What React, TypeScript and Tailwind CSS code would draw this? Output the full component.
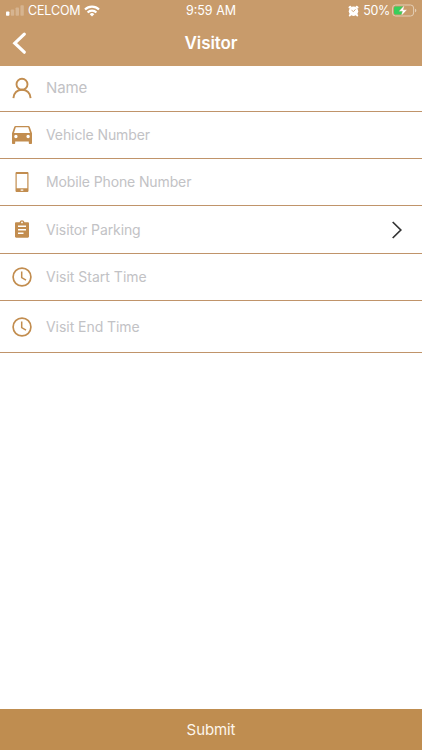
import type { ReactNode } from 'react';

const GOLD = '#c28d4f';

function UserIcon() {
  return (
    <svg width="20" height="22" viewBox="0 0 20 22" fill="none" stroke={GOLD} strokeWidth="1.9">
      <circle cx="10" cy="7.2" r="5.5" />
      <path d="M1.4 21.1C1.6 16 5.200 12.800 10 12.800s8.400 3.200 8.600 8.300" />
    </svg>
  );
}

function CarIcon() {
  return (
    <svg width="22" height="20" viewBox="0 0 22 20" fill={GOLD}>
      <path
        fillRule="evenodd"
        d="M4.600 1h12.800c.7 0 1.200.4 1.400 1l2.200 6.200V18c0 .6-.4 1-1 1h-1.200c-.6 0-1-.4-1-1v-1.500H4.200V18c0 .6-.4 1-1 1H2c-.6 0-1-.4-1-1V8.200L3.200 2c.2-.6.700-1 1.400-1ZM4.800 2.300 3 8h16l-1.800-5.700ZM4.900 9.800a1.700 1.700 0 1 0 0 3.400 1.700 1.700 0 0 0 0-3.400Zm12.200 0a1.700 1.700 0 1 0 0 3.400 1.700 1.700 0 0 0 0-3.400Z"
      />
    </svg>
  );
}

function PhoneIcon() {
  return (
    <svg width="14" height="22" viewBox="0 0 14 22" fill={GOLD}>
      <path
        fillRule="evenodd"
        d="M1.800 1h10.400c.8 0 1.300.5 1.300 1.300v17.400c0 .8-.5 1.300-1.300 1.300H1.800C1 21 .5 20.500.5 19.700V2.300C.5 1.500 1 1 1.800 1Zm-.1 2v14.300h10.600V3ZM5.700 18.600v1.100h2.600v-1.100Z"
      />
    </svg>
  );
}

function ClipboardIcon() {
  return (
    <svg className="mb-px" width="16" height="20" viewBox="0 0 16 20" fill={GOLD}>
      <path
        fillRule="evenodd"
        d="M2.200 3.200h3.300a2.600 2.600 0 0 1 5 0h3.300c.7 0 1.200.5 1.200 1.200v13.200c0 .7-.5 1.200-1.200 1.200H2.200c-.7 0-1.200-.5-1.200-1.200V4.400c0-.7.500-1.200 1.200-1.200ZM8 2.500a.9.9 0 1 0 0 1.800.9.900 0 0 0 0-1.800ZM4 6.600v1.500h8V6.600Zm0 3.500v1.500h8v-1.500Zm0 3.500v1.500h5.500v-1.500Z"
      />
    </svg>
  );
}

function ClockIcon() {
  return (
    <svg width="20" height="20" viewBox="0 0 20 20" fill="none" stroke={GOLD} strokeWidth="1.700">
      <circle cx="10" cy="10" r="8.900" />
      <path d="M9.700 4.600v6l4.300 2.600" strokeWidth="1.500" />
    </svg>
  );
}

function Field({ icon, label, className, text, trailing }: {
  icon: ReactNode;
  label: string;
  className: string;
  text: string;
  trailing?: ReactNode;
}) {
  return (
    <div className={`flex items-center border-b border-[#c0946a] ${className}`}>
      <div className="flex w-[43px] shrink-0 justify-center">{icon}</div>
      <span className={`flex-1 whitespace-nowrap pl-[3px] leading-5 text-[#c2c2c5] ${text}`}>{label}</span>
      {trailing}
    </div>
  );
}

function StatusBar() {
  return (
    <div className="grid h-[21px] grid-cols-[1fr_auto_1fr] items-center text-[12.500px] leading-5">
      <div className="flex items-center pl-1.5">
        <svg width="18" height="11" viewBox="0 0 18 11" fill="#fff">
          <rect x="0" y="6.500" width="3.400" height="4.200" rx=".8" />
          <rect x="4.800" y="4.500" width="3.400" height="6.200" rx=".8" opacity=".25" />
          <rect x="9.600" y="2.500" width="3.400" height="8.200" rx=".8" opacity=".25" />
          <rect x="14.400" y="0.300" width="3.400" height="10.400" rx=".8" opacity=".25" />
        </svg>
        <span className="ml-1 w-[52px] whitespace-nowrap pt-px tracking-[-0.15px]">CELCOM</span>
        <svg className="ml-1" width="16" height="12" viewBox="0 0 16 12" fill="none" stroke="#fff" strokeWidth="2.200">
          <path d="M1 4.500a10 10 0 0 1 14 0" />
          <path d="M3.600 7.400a6.200 6.200 0 0 1 8.800 0" />
          <path d="M5.700 9.200a3.300 3.300 0 0 1 4.600 0L8 11.500Z" fill="#fff" stroke="none" />
        </svg>
      </div>
      <span className="whitespace-nowrap pt-px">9:59 AM</span>
      <div className="flex items-center justify-end pr-[5px]">
        <svg width="11" height="12" viewBox="0 0 11 12">
          <circle cx="5.500" cy="6.200" r="4.700" fill="#fff" />
          <path d="M1.500 2.500 2.300 1.700M9.500 2.500 8.700 1.700M2.200 9.900l-.4.5M8.800 9.900l.4.5" stroke="#fff" strokeWidth="2" strokeLinecap="round" />
          <path d="M5.500 6.600 3.500 5.200M5.500 6.600l2-2.300" fill="none" stroke="#c89b6b" strokeWidth=".9" />
        </svg>
        <span className="ml-1 whitespace-nowrap pt-px tracking-[-0.3px]">50%</span>
        <svg className="ml-[2px]" width="25" height="13" viewBox="0 0 25 13">
          <rect x=".6" y="1" width="21" height="11" rx="3" fill="none" stroke="#e4ceb5" />
          <path d="M3.500 2.400H11v8.200H3.500c-.9 0-1.500-.6-1.500-1.500V3.900c0-.9.6-1.500 1.500-1.500Z" fill="#38cf5b" />
          <path d="M23 4.700c1 .4 1.300 1 1.300 1.800s-.3 1.400-1.300 1.800Z" fill="#e4ceb5" />
          <path d="M12.400 1.300 6.900 7.200h3.500l-1.200 4.900 5.900-6.300h-3.700Z" fill="#fff" stroke="#c89b6b" strokeWidth=".4" />
        </svg>
      </div>
    </div>
  );
}

export default function App() {
  return (
    <div className="flex h-[750px] w-full flex-col bg-white font-['Inter','Liberation_Sans',sans-serif]">
      <header className="h-[66px] shrink-0 bg-[#c89b6b] text-white">
        <StatusBar />
        <div className="grid h-[43px] grid-cols-[1fr_auto_1fr] items-center">
          <button aria-label="Back" className="ml-3 w-4">
            <svg width="16" height="24" viewBox="0 0 16 24" fill="none" stroke="#fff" strokeWidth="3.200" strokeLinecap="round">
              <path d="M12.300 3.200 2.800 12.200l9.500 9" />
            </svg>
          </button>
          <h1 className="text-[17px] font-semibold leading-6 tracking-[-0.1px]">Visitor</h1>
        </div>
      </header>

      <main className="flex-1">
        <Field icon={<UserIcon />} label="Name" className="h-[46px] pb-px" text="text-[15px] tracking-[-0.15px]" />
        <Field icon={<CarIcon />} label="Vehicle Number" className="h-[47px]" text="text-[14px] tracking-[-0.1px]" />
        <Field icon={<PhoneIcon />} label="Mobile Phone Number" className="h-[47px]" text="text-[14px] tracking-[-0.12px]" />
        <Field
          icon={<ClipboardIcon />}
          label="Visitor Parking"
          className="h-12"
          text="text-[14px] tracking-[-0.1px]"
          trailing={
            <svg className="mr-[18px]" width="14" height="20" viewBox="0 0 14 20" fill="none" stroke="#333" strokeWidth="1.700">
              <path d="M2.700 2 10.800 10l-8.100 8" />
            </svg>
          }
        />
        <Field icon={<ClockIcon />} label="Visit Start Time" className="h-[47px]" text="text-[14px]" />
        <Field icon={<ClockIcon />} label="Visit End Time" className="h-[52px]" text="text-[14px] tracking-[-0.05px]" />
      </main>

      <button className="h-[41px] shrink-0 bg-[#bf8d50] text-[15px] leading-5 tracking-[-0.1px] text-[#fdf6ec]">Submit</button>
    </div>
  );
}
